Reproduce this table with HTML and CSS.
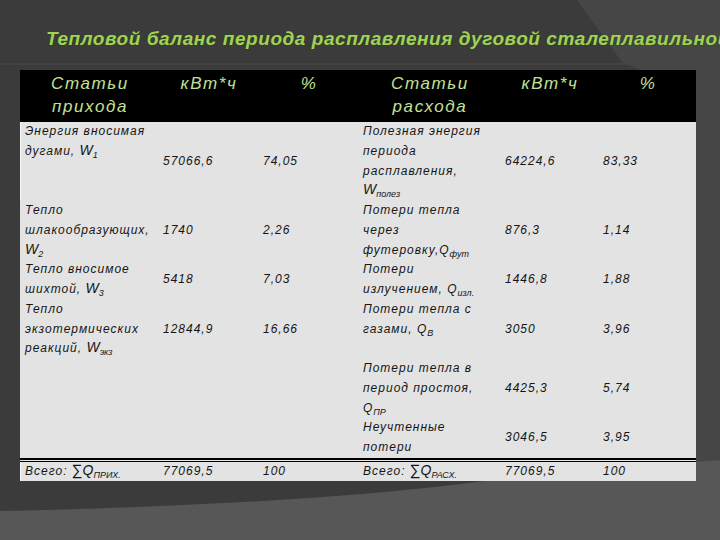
FILE: index.html
```html
<!DOCTYPE html>
<html lang="ru">
<head>
<meta charset="utf-8">
<title>Тепловой баланс</title>
<link rel="stylesheet" href="styles.css">
</head>
<body>
<div class="slide">
  <h1 class="title">Тепловой баланс периода расплавления дуговой сталеплавильной</h1>
  <table class="balance">
    <colgroup>
      <col class="c-label-in"><col class="c-num"><col class="c-num">
      <col class="c-label-out"><col class="c-num2"><col class="c-num2">
    </colgroup>
    <thead>
      <tr>
        <th>Статьи<br>прихода</th>
        <th>кВт*ч</th>
        <th>%</th>
        <th>Статьи<br>расхода</th>
        <th>кВт*ч</th>
        <th>%</th>
      </tr>
    </thead>
    <tbody>
      <tr>
        <td class="lbl">Энергия вносимая<br>дугами, <span class="sym">W</span><span class="sub">1</span></td>
        <td class="val">57066,6</td>
        <td class="val">74,05</td>
        <td class="lbl">Полезная энергия<br>периода<br>расплавления,<br><span class="sym">W</span><span class="sub">полез</span></td>
        <td class="val">64224,6</td>
        <td class="val">83,33</td>
      </tr>
      <tr>
        <td class="lbl">Тепло<br>шлакообразующих,<br><span class="sym">W</span><span class="sub">2</span></td>
        <td class="val">1740</td>
        <td class="val">2,26</td>
        <td class="lbl">Потери тепла<br>через<br>футеровку,Q<span class="sub">фут</span></td>
        <td class="val">876,3</td>
        <td class="val">1,14</td>
      </tr>
      <tr>
        <td class="lbl">Тепло вносимое<br>шихтой, <span class="sym">W</span><span class="sub">3</span></td>
        <td class="val">5418</td>
        <td class="val">7,03</td>
        <td class="lbl">Потери<br>излучением, Q<span class="sub">изл.</span></td>
        <td class="val">1446,8</td>
        <td class="val">1,88</td>
      </tr>
      <tr>
        <td class="lbl">Тепло<br>экзотермических<br>реакций, <span class="sym">W</span><span class="sub">экз</span></td>
        <td class="val">12844,9</td>
        <td class="val">16,66</td>
        <td class="lbl">Потери тепла с<br>газами, Q<span class="sub">B</span></td>
        <td class="val">3050</td>
        <td class="val">3,96</td>
      </tr>
      <tr>
        <td class="lbl"></td>
        <td class="val"></td>
        <td class="val"></td>
        <td class="lbl">Потери тепла в<br>период простоя,<br>Q<span class="sub">ПР</span></td>
        <td class="val">4425,3</td>
        <td class="val">5,74</td>
      </tr>
      <tr class="last">
        <td class="lbl"></td>
        <td class="val"></td>
        <td class="val"></td>
        <td class="lbl">Неучтенные<br>потери</td>
        <td class="val">3046,5</td>
        <td class="val">3,95</td>
      </tr>
    </tbody>
    <tfoot>
      <tr>
        <td class="lbl">Всего: <span class="sigma">∑</span><span class="sym">Q</span><span class="sub">ПРИХ.</span></td>
        <td class="val">77069,5</td>
        <td class="val">100</td>
        <td class="lbl">Всего: <span class="sigma">∑</span><span class="sym">Q</span><span class="sub">РАСХ.</span></td>
        <td class="val">77069,5</td>
        <td class="val">100</td>
      </tr>
    </tfoot>
  </table>
</div>
</body>
</html>
```

FILE: styles.css
```css
html, body {
  margin: 0;
  padding: 0;
}

body {
  width: 720px;
  height: 540px;
  overflow: hidden;
  background-color: #3b3b3b;
  background-image: url("data:image/svg+xml;utf8,<svg xmlns='http://www.w3.org/2000/svg' width='720' height='540'><rect x='0' y='63' width='720' height='2' fill='%23424242'/><path d='M577 0 L720 0 L720 470 L640 470 L640 70 L622 62 Z' fill='%23464646'/><path d='M0 511 C150 508 330 500 460 484 C560 472 640 466 720 460 L720 540 L0 540 Z' fill='%23575757'/></svg>");
  background-repeat: no-repeat;
  font-family: "Liberation Sans", Arial, sans-serif;
}

.slide {
  padding-top: 28px;
}

.title {
  margin: 0;
  padding-left: 46px;
  height: 22px;
  line-height: 22px;
  font-size: 19px;
  font-weight: bold;
  font-style: italic;
  letter-spacing: 0.55px;
  color: #a2d05a;
  text-shadow: 0 0 1px #2c4f12, 0 0 1px #2c4f12;
  white-space: nowrap;
  overflow: hidden;
}

.balance {
  margin: 20px 0 0 20px;
  width: 675px;
  table-layout: fixed;
  border-collapse: separate;
  border-spacing: 0;
}

.c-label-in { width: 138px; }
.c-num { width: 100px; }
.c-label-out { width: 142px; }
.c-num2 { width: 98px; }

.balance thead th {
  background: #000;
  color: #c3e196;
  font-weight: normal;
  font-style: italic;
  font-size: 17px;
  letter-spacing: 1.6px;
  line-height: 23px;
  text-align: center;
  vertical-align: top;
  padding: 2px 0 4px 2px;
  height: 46px;
}

.balance tbody td,
.balance tfoot td {
  background: #e3e3e3;
  color: #151515;
  font-style: italic;
  font-size: 12px;
  letter-spacing: 1px;
  line-height: 19.75px;
  padding: 0 0 0 5px;
  white-space: nowrap;
  overflow: visible;
}

.balance td.lbl {
  vertical-align: top;
}

.balance td.val {
  vertical-align: middle;
}

.balance tbody tr:first-child td:first-child {
  box-shadow: inset 1px 0 0 #f6f6f6;
}

.balance tr.last td {
  border-bottom: 2px solid #000;
}

.balance tfoot td {
  padding-top: 2px;
  line-height: 19px;
  box-shadow: inset 0 1px 0 #e3e3e3, inset 0 2px 0 #000;
}

.balance tfoot td:first-child {
  box-shadow: inset 0 1px 0 #e3e3e3, inset 0 2px 0 #000, inset 1px 0 0 #f6f6f6;
}

.sym {
  font-size: 14px;
  letter-spacing: 0;
  line-height: 0;
}

.sub {
  font-size: 9px;
  letter-spacing: 0;
  line-height: 0;
  position: relative;
  top: 3px;
}

.sigma {
  font-size: 15px;
  font-style: normal;
  letter-spacing: 0;
  line-height: 0;
}
```
